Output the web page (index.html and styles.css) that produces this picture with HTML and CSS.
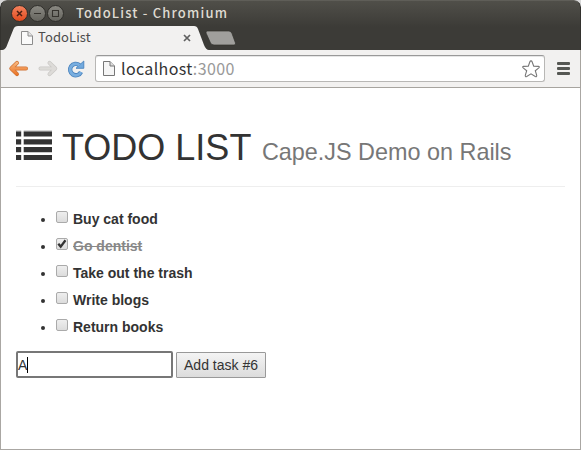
FILE: index.html
```html
<!DOCTYPE html>
<html lang="en">
<head>
<meta charset="utf-8">
<title>TodoList</title>
<link rel="stylesheet" href="styles.css">
</head>
<body>
<div class="window">
  <header class="frame">
    <div class="titlebar">
      <svg class="controls" width="54" height="18" viewBox="0 0 54 18">
        <defs>
          <linearGradient id="red" x1="0" y1="0" x2="0" y2="1"><stop offset="0" stop-color="#f5845f"/><stop offset="1" stop-color="#e2481c"/></linearGradient>
          <linearGradient id="grey" x1="0" y1="0" x2="0" y2="1"><stop offset="0" stop-color="#8b8a83"/><stop offset="1" stop-color="#64635d"/></linearGradient>
        </defs>
        <g stroke="#2f2e2a">
          <circle cx="9.500" cy="8.500" r="8" fill="url(#red)"/>
          <circle cx="27.500" cy="8.500" r="8" fill="url(#grey)"/>
          <circle cx="45.500" cy="8.500" r="8" fill="url(#grey)"/>
        </g>
        <g fill="none" stroke="#35322d" stroke-width="1.1">
          <path d="M7 6l5 5m0-5l-5 5" stroke="#4c2013" stroke-width="1.5"/>
          <path d="M24 8.500h7"/>
          <path d="M42.500 5.500h6v6h-6z"/>
        </g>
      </svg>
      <span class="window-title">TodoList - Chromium</span>
    </div>
    <div class="tabstrip">
      <svg class="tab-shape" width="240" height="24" viewBox="0 0 240 24">
        <path d="M0 24C4 24 5 22 6.500 18L12.500 3Q13.500 0 17 0H193Q196 0 197 3L203 19Q205 24 208 24Z" fill="#f2f1f0"/>
        <path d="M206.500 5H228Q230 5 231 7.500L234.500 17Q235 19 233 19H213Q210.500 19 209.500 17L205 7Q204.500 5 206.500 5Z" fill="#a09f9c" stroke="#30302c" stroke-width=".7"/>
      </svg>
      <div class="tab">
        <svg width="12" height="15" viewBox="0 0 12 15"><path d="M.5.5H7L11.500 5V13.500H.5Z" fill="#fafafa" stroke="#8c8c8c"/><path d="M7 .5V5H11.500" fill="#e4e4e4" stroke="#8c8c8c"/></svg>
        <span class="tab-title">TodoList</span>
        <svg class="tab-close" width="8" height="8" viewBox="0 0 8 8"><path d="M1 1l6 6m0-6l-6 6" stroke="#606060" stroke-width="1.7"/></svg>
      </div>
    </div>
  </header>
  <nav class="toolbar">
    <svg class="nav-icons" width="76" height="20" viewBox="0 0 76 20">
      <defs>
        <linearGradient id="orange" gradientUnits="userSpaceOnUse" x1="0" y1="3" x2="0" y2="16"><stop offset="0" stop-color="#f9b880"/><stop offset="1" stop-color="#ea7324"/></linearGradient>
      </defs>
      <g fill="none" stroke-linecap="round" stroke-linejoin="round">
        <path d="M8 3.800L2.300 9.500 8 15.200M3 9.500H17" stroke="#cf7436" stroke-width="4"/>
        <path d="M8 3.800L2.300 9.500 8 15.200M3 9.501L17 9.500" stroke="url(#orange)" stroke-width="2.600"/>
        <path d="M40.500 3.800L46.200 9.500 40.500 15.200M45.500 9.500H31.500" stroke="#cac8c5" stroke-width="4"/>
        <path d="M40.500 3.800L46.200 9.500 40.500 15.200M45.500 9.500H31.500" stroke="#dddbd8" stroke-width="2.600"/>
      </g>
      <path d="M70.500 6.200A5.700 5.700 0 1 0 72 13" fill="none" stroke="#4c84bd" stroke-width="4.400"/>
      <path d="M74.800 2V9.300H67Z" fill="#71a9de" stroke="#4c84bd" stroke-width=".9"/>
      <path d="M70.500 6.200A5.700 5.700 0 1 0 72 13" fill="none" stroke="#78aee0" stroke-width="2.800"/>
    </svg>
    <div class="omnibox">
      <svg width="12" height="15" viewBox="0 0 12 15"><path d="M.5.5H7L11.500 5V14.500H.5Z" fill="#f5f5f5" stroke="#777"/><path d="M7 .5V5H11.500" fill="#ddd" stroke="#777"/></svg>
      <span class="url">localhost<span class="port">:3000</span></span>
      <svg class="star" width="18" height="18" viewBox="0 0 18 18"><path d="M9 .9Q9.800.9 10.200 2L11.700 6.200 16.400 6.400Q18 6.700 16.800 7.900L13.300 10.700 14.700 15.400Q14.900 17.200 13.300 16.500L9 13.800 4.700 16.500Q3.100 17.200 3.300 15.400L4.700 10.700 1.200 7.900Q0 6.700 1.600 6.400L6.300 6.200 7.800 2Q8.200.9 9 .9Z" fill="#fff" stroke="#777" stroke-width="1.100"/></svg>
    </div>
    <div class="menu"><i></i><i></i><i></i></div>
  </nav>
  <main class="page">
    <h1 class="heading">
      <svg width="36" height="29" viewBox="0 0 36 29" fill="#333"><path d="M0 .4h5.200v5H0zM7.700.4H36v5H7.700zM0 8.200h5.200v5.300H0zM7.700 8.200H36v5.300H7.700zM0 16h5.200v5.300H0zM7.700 16H36v5.300H7.700zM0 24h5.200v5H0zM7.700 24H36v5H7.700z"/><path d="M0-.6h5.200v1H0zM7.700-.6H36v1H7.700z" opacity=".4"/></svg>
      <span class="name">TODO LIST</span>
      <small>Cape.JS Demo on Rails</small>
    </h1>
    <ul class="tasks">
      <li><span class="box"></span><span class="label">Buy cat food</span></li>
      <li><span class="box"><svg width="12" height="12" viewBox="0 0 12 12"><path d="M2.300 5.700L4.700 8.600 9.500 2.200" fill="none" stroke="#333" stroke-width="2.300"/></svg></span><span class="label done">Go dentist</span></li>
      <li><span class="box"></span><span class="label">Take out the trash</span></li>
      <li><span class="box"></span><span class="label">Write blogs</span></li>
      <li><span class="box"></span><span class="label">Return books</span></li>
    </ul>
    <div class="form">
      <div class="field">A<span class="caret"></span></div>
      <button class="add" type="button">Add task #6</button>
    </div>
  </main>
</div>
</body>
</html>
```
FILE: styles.css
```css
* { box-sizing: border-box; }
body { margin: 0; background: #d8d8d8; font-family: "Liberation Sans", Arial, sans-serif; color: #333; }
svg { display: block; flex: none; overflow: visible; }
.window { width: 581px; height: 450px; display: flex; flex-direction: column; border-radius: 7px 7px 0 0; overflow: hidden; }
.frame { height: 50px; background: linear-gradient(#504f49, #3c3b37 26px); border: 1px solid #33322e; border-top-color: #5f5e58; border-bottom: 0; border-radius: 7px 7px 0 0; }
.titlebar { height: 25px; display: flex; align-items: center; padding-left: 9px; }
.window-title { margin: -2px 0 0 12px; font: 500 13px/20px "Noto Sans CJK JP", sans-serif; letter-spacing: 1.18px; color: #dfdbd2; white-space: nowrap; }
.tabstrip { height: 24px; position: relative; }
.tab-shape { position: absolute; left: 0; top: 0; }
.tab { position: relative; width: 206px; height: 24px; display: flex; align-items: center; padding-left: 20px; }
.tab-title { margin: -2px 0 0 5px; font: 13px/20px "Noto Sans CJK JP", sans-serif; letter-spacing: .1px; color: #4c4c4c; }
.tab-close { margin-left: auto; margin-right: 16px; }
.toolbar { height: 38px; display: flex; align-items: center; background: #f2f1f0; border: solid #a7a49f; border-width: 0 1px 1px; padding: 0 10px 0 8px; }
.omnibox { flex: 1; height: 27px; margin: 0 12px 0 10px; display: flex; align-items: center; padding: 0 4px 0 7px; background: #fff; border: 1px solid #b8b7b5; border-top-color: #999; border-radius: 3px; box-shadow: inset 0 1px #e6e6e6; }
.url { flex: 1; margin: -2px 0 0 6px; font: 16px/22px "Noto Sans CJK JP", sans-serif; letter-spacing: .36px; color: #333; }
.port { color: #999; }
.menu { width: 13px; display: flex; flex-direction: column; gap: 2px; }
.menu i { height: 3px; border-radius: 1px; background: #555753; }
.page { flex: 1; background: #fff; border: solid #aaa7a3; border-width: 0 1px 1px; padding: 38px 15px 0; }
.heading { height: 61px; margin: 0 0 19px; display: flex; align-items: baseline; border-bottom: 1px solid #eee; font-size: 36px; line-height: 43px; font-weight: 400; white-space: nowrap; }
.heading .name { margin-left: 10px; }
.heading small { margin-left: 10.5px; font-size: 23.4px; color: #777; }
.tasks { margin: 0; padding: 0 0 0 40px; font-size: 14px; line-height: 20px; }
.tasks li { height: 27px; padding-top: 3px; }
.box { display: inline-block; width: 12px; height: 12px; margin-right: 5px; vertical-align: 1px; border: 1px solid #aaa; border-radius: 2px; background: linear-gradient(#eee, #dcdcdc); }
.box svg { margin: -1px; }
.label { font-weight: 700; }
.done { color: #888; text-decoration: line-through; }
.form { display: flex; align-items: center; gap: 3px; margin-top: 10px; }
.field { width: 157px; height: 27px; display: flex; align-items: center; padding-left: 0; border: 2px solid #777; border-radius: 2px; font-size: 14px; }
.caret { width: 1px; height: 16px; background: #000; }
.add { width: 90px; height: 26px; padding: 0; border: 1px solid #999; border-radius: 1px; background: linear-gradient(#f4f4f4, #dcdcdc); font: 14px "Liberation Sans", Arial, sans-serif; color: #333; white-space: nowrap; }
```
